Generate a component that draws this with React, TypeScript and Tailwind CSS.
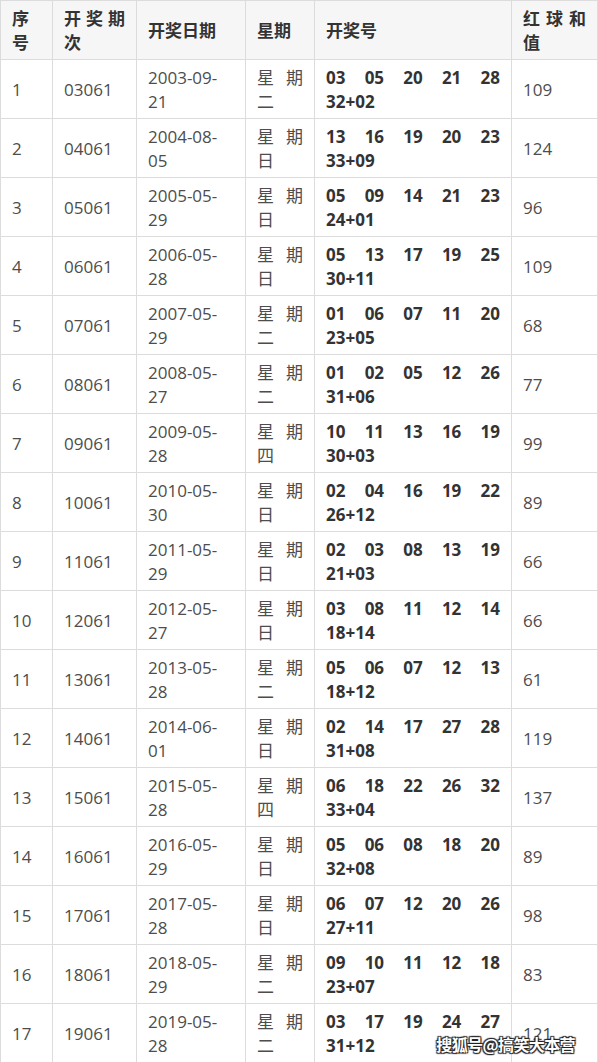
import React from "react";

type Row = [string, string, string, string, string, string, string, string];

const rows: Row[] = [
  ["1", "03061", "2003-09-", "21", "二", "03 05 20 21 28", "32+02", "109"],
  ["2", "04061", "2004-08-", "05", "日", "13 16 19 20 23", "33+09", "124"],
  ["3", "05061", "2005-05-", "29", "日", "05 09 14 21 23", "24+01", "96"],
  ["4", "06061", "2006-05-", "28", "日", "05 13 17 19 25", "30+11", "109"],
  ["5", "07061", "2007-05-", "29", "二", "01 06 07 11 20", "23+05", "68"],
  ["6", "08061", "2008-05-", "27", "二", "01 02 05 12 26", "31+06", "77"],
  ["7", "09061", "2009-05-", "28", "四", "10 11 13 16 19", "30+03", "99"],
  ["8", "10061", "2010-05-", "30", "日", "02 04 16 19 22", "26+12", "89"],
  ["9", "11061", "2011-05-", "29", "日", "02 03 08 13 19", "21+03", "66"],
  ["10", "12061", "2012-05-", "27", "日", "03 08 11 12 14", "18+14", "66"],
  ["11", "13061", "2013-05-", "28", "二", "05 06 07 12 13", "18+12", "61"],
  ["12", "14061", "2014-06-", "01", "日", "02 14 17 27 28", "31+08", "119"],
  ["13", "15061", "2015-05-", "28", "四", "06 18 22 26 32", "33+04", "137"],
  ["14", "16061", "2016-05-", "29", "日", "05 06 08 18 20", "32+08", "89"],
  ["15", "17061", "2017-05-", "28", "日", "06 07 12 20 26", "27+11", "98"],
  ["16", "18061", "2018-05-", "29", "二", "09 10 11 12 18", "23+07", "83"],
  ["17", "19061", "2019-05-", "28", "二", "03 17 19 24 27", "31+12", "121"],
];

const cell =
  "h-[59px] border-r border-b border-[#dcdcdc] px-[11px] pt-[2px] flex flex-col justify-center min-w-0";
const head = cell + " bg-[#f6f6f6] font-bold text-[#333333]";
const body = cell + " bg-white text-[#4d4d4d]";

function Spread({ items }: { items: string[] }) {
  return (
    <div className="flex justify-between">
      {items.map((t, i) => (
        <span key={i}>{t}</span>
      ))}
    </div>
  );
}

export default function App() {
  return (
    <div
      className="relative w-[598px] h-[1062px] overflow-hidden bg-white text-[17px] leading-[24px]"
      style={{ fontFamily: '"Open Sans", "Noto Sans CJK SC", sans-serif' }}
    >
      <div className="grid grid-cols-[53px_84px_109px_69px_197px_86px] border-t border-[#dcdcdc] [&>div:nth-child(6n+1)]:border-l [&>div:nth-child(6n+1)]:w-[53px]">
        <div className={head}>
          <div>序</div>
          <div>号</div>
        </div>
        <div className={head}>
          <Spread items={["开", "奖", "期"]} />
          <div>次</div>
        </div>
        <div className={head}>
          <div>开奖日期</div>
        </div>
        <div className={head}>
          <div>星期</div>
        </div>
        <div className={head}>
          <div>开奖号</div>
        </div>
        <div className={head}>
          <Spread items={["红", "球", "和"]} />
          <div>值</div>
        </div>

        {rows.map((r) => (
          <React.Fragment key={r[0]}>
            <div className={body}>
              <div>{r[0]}</div>
            </div>
            <div className={body}>
              <div>{r[1]}</div>
            </div>
            <div className={body}>
              <div>{r[2]}</div>
              <div>{r[3]}</div>
            </div>
            <div className={body}>
              <Spread items={["星", "期"]} />
              <div>{r[4]}</div>
            </div>
            <div className={body + " font-bold !text-[#333333]"}>
              <Spread items={r[5].split(" ")} />
              <div>{r[6]}</div>
            </div>
            <div className={body}>
              <div>{r[7]}</div>
            </div>
          </React.Fragment>
        ))}
      </div>

      <div
        className="absolute right-[23px] bottom-[8px] text-[16px] leading-[20px] font-bold text-white tracking-[-0.6px]"
        style={{
          fontFamily: '"Noto Sans CJK SC", sans-serif',
          textShadow:
            "1px 1px 1px #222, -1px -1px 1px #222, 1px -1px 1px #222, -1px 1px 1px #222",
        }}
      >
        搜狐号@搞笑大本营
      </div>
    </div>
  );
}
